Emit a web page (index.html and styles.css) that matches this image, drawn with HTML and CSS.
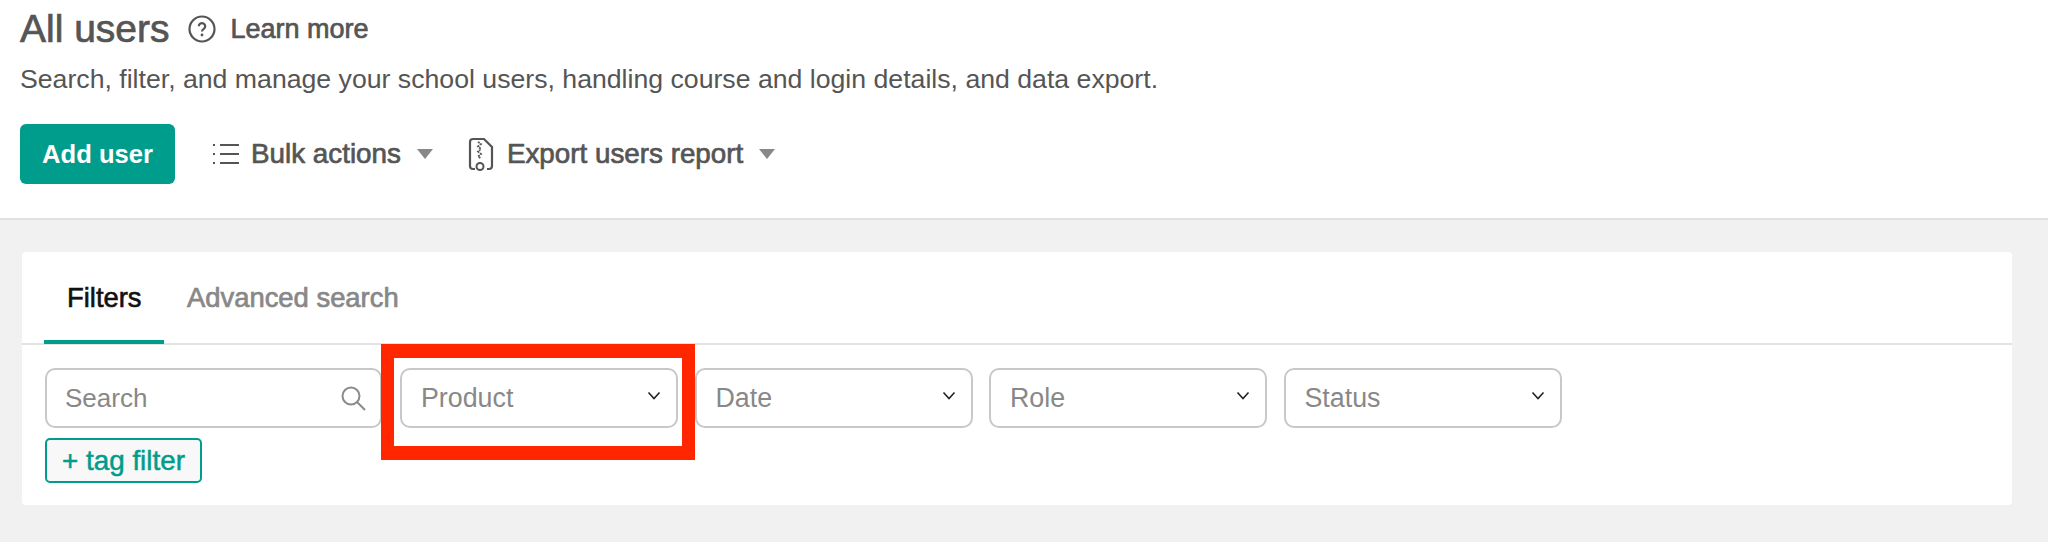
FILE: index.html
```html
<!DOCTYPE html>
<html lang="en">
<head>
<meta charset="utf-8">
<title>All users</title>
<link rel="stylesheet" href="styles.css">
</head>
<body>
<header class="page-header">
  <div class="title-row">
    <h1 class="title">All users</h1>
    <a class="learn">
      <svg class="help-icon" viewBox="0 0 28 28" width="28" height="28"><circle cx="14" cy="14" r="12.5" fill="none" stroke="#555" stroke-width="2.200"/><path d="M10.8 11.2a3.2 3.2 0 1 1 5 2.7c-1.2.8-1.8 1.3-1.8 2.600" fill="none" stroke="#555" stroke-width="2.200"/><circle cx="14" cy="20" r="1.400" fill="#555"/></svg>
      <span>Learn more</span>
    </a>
  </div>
  <p class="desc">Search, filter, and manage your school users, handling course and login details, and data export.</p>
  <div class="actions">
    <button class="primary">Add user</button>
    <div class="action action-bulk">
      <svg viewBox="0 0 28 24" width="28" height="24"><path d="M8 3h19M8 12h19M8 21h19" stroke="#555" stroke-width="2"/><path d="M1 3h2M1 12h2M1 21h2" stroke="#555" stroke-width="2"/></svg>
      <span>Bulk actions</span>
      <i class="caret"></i>
    </div>
    <div class="action action-export">
      <svg viewBox="0 0 26 34" width="26" height="34"><path d="M7 32H5a3 3 0 0 1-3-3V5a3 3 0 0 1 3-3h11l8 8v19a3 3 0 0 1-3 3h-2" fill="none" stroke="#555" stroke-width="2.200"/><path d="M10 5l3 2-3 2.500 3 2.500-3 2.500 3 2.500-3 2.500 3 2" fill="none" stroke="#555" stroke-width="1.800" stroke-dasharray="2 1"/><rect x="8.500" y="26" width="7" height="7" rx="3.500" fill="none" stroke="#555" stroke-width="2"/></svg>
      <span>Export users report</span>
      <i class="caret"></i>
    </div>
  </div>
</header>
<main class="card">
  <nav class="tabs">
    <a class="tab tab-active">Filters</a>
    <a class="tab">Advanced search</a>
  </nav>
  <section class="filters">
    <div class="filter-row">
      <div class="field field-search">
        <span>Search</span>
        <svg viewBox="0 0 26 26" width="26" height="26"><circle cx="11" cy="11" r="8.500" fill="none" stroke="#8a8a8a" stroke-width="2"/><path d="M17 17l8 8" stroke="#8a8a8a" stroke-width="2"/></svg>
      </div>
      <div class="field field-select field-product">
        <span>Product</span>
        <svg class="chev" viewBox="0 0 14 9" width="14" height="9"><path d="M1.500 1.500L7 7.500l5.500-6" fill="none" stroke="#222" stroke-width="1.600"/></svg>
        <div class="highlight"></div>
      </div>
      <div class="field field-select">
        <span>Date</span>
        <svg class="chev" viewBox="0 0 14 9" width="14" height="9"><path d="M1.500 1.500L7 7.500l5.500-6" fill="none" stroke="#222" stroke-width="1.600"/></svg>
      </div>
      <div class="field field-select">
        <span>Role</span>
        <svg class="chev" viewBox="0 0 14 9" width="14" height="9"><path d="M1.500 1.500L7 7.500l5.500-6" fill="none" stroke="#222" stroke-width="1.600"/></svg>
      </div>
      <div class="field field-select">
        <span>Status</span>
        <svg class="chev" viewBox="0 0 14 9" width="14" height="9"><path d="M1.500 1.500L7 7.500l5.500-6" fill="none" stroke="#222" stroke-width="1.600"/></svg>
      </div>
    </div>
    <button class="tag-filter">+ tag filter</button>
  </section>
</main>
</body>
</html>
```
FILE: styles.css
```css
* { box-sizing: border-box; }
html, body { margin: 0; padding: 0; }
body {
  height: 542px;
  overflow: hidden;
  background: #f1f1f1;
  font-family: "Liberation Sans", Arial, sans-serif;
  color: #555;
}
.page-header {
  height: 220px;
  background: #fff;
  border-bottom: 2px solid #e0e0e0;
  padding: 8px 20px 0;
}
.title-row { display: flex; align-items: center; height: 42px; }
.title { margin: 0; font-size: 39px; font-weight: 400; line-height: 42px; -webkit-text-stroke: 0.7px #555; }
.learn { display: flex; align-items: center; margin-left: 18px; font-size: 27px; -webkit-text-stroke: 0.7px #555; }
.help-icon { margin-right: 15px; }
.desc { margin: 12px 0 0; font-size: 26.660px; line-height: 34px; color: #555; }
.actions { display: flex; align-items: center; margin-top: 28px; }
.primary {
  width: 155px;
  height: 60px;
  border: 0;
  border-radius: 6px;
  background: #009c8c;
  color: #fff;
  font: bold 25.600px "Liberation Sans", Arial, sans-serif;
}
.action { display: flex; align-items: center; font-size: 27.800px; -webkit-text-stroke: 0.7px #555; }
.action-bulk { margin-left: 37px; }
.action-bulk span { margin-left: 11px; }
.action-export { margin-left: 35px; }
.action-export span { margin-left: 13px; }
.caret {
  width: 0;
  height: 0;
  margin-left: 16px;
  border-left: 8px solid transparent;
  border-right: 8px solid transparent;
  border-top: 10px solid #888;
}
.card {
  width: 1990px;
  height: 253px;
  margin: 32px 0 0 22px;
  background: #fff;
  border-radius: 4px;
}
.tabs {
  display: flex;
  height: 93px;
  padding-left: 22px;
  border-bottom: 2px solid #e2e2e2;
}
.tab {
  height: 92px;
  font-size: 27.400px;
  line-height: 92px;
  color: #888;
  -webkit-text-stroke: 0.7px #888;
}
.tab-active {
  width: 120px;
  padding: 0 0 0 23px;
  margin-right: 23px;
  color: #111;
  border-bottom: 4px solid #009c8c;
  -webkit-text-stroke: 0.6px #111;
}
.filters { padding: 23px 23px 0; }
.filter-row { display: flex; gap: 16.500px; }
.field {
  display: flex;
  align-items: center;
  justify-content: space-between;
  height: 60px;
  border: 2px solid #c8c8c8;
  border-radius: 10px;
  font-size: 26.800px;
  color: #888;
  background: #fff;
}
.field-search { width: 337px; margin-right: 1.500px; padding: 0 14px 0 18px; font-size: 26px; }
.field-select { position: relative; width: 278px; padding: 0 15px 0 19px; }
.chev { margin-bottom: 5px; }
.highlight {
  position: absolute;
  left: -21px;
  top: -26px;
  width: 314px;
  height: 116px;
  border: solid #ff2600;
  border-width: 14px 13px;
}
.tag-filter {
  display: block;
  width: 157px;
  height: 45px;
  margin-top: 10px;
  padding: 0;
  background: #f8f8f8;
  border: 2px solid #009c8c;
  border-radius: 5px;
  color: #009c8c;
  font: 27.800px "Liberation Sans", Arial, sans-serif;
  -webkit-text-stroke: 0.5px #009c8c;
}
```
